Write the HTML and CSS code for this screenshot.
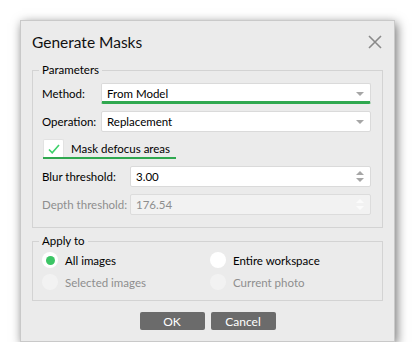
FILE: index.html
```html
<!DOCTYPE html>
<html>
  <head>
    <title>Generate Masks</title>
    <link rel="stylesheet" href="styles.css">
  </head>
  <body>
    <div class="dialog">
      <div class="dialog-header">
        <h1>Generate Masks</h1>
        <svg class="close" width="14" height="14" viewBox="0 0 14 14">
          <path d="M1 1 L13 13 M13 1 L1 13" stroke="#8a8a8a" stroke-width="1.6" fill="none" />
        </svg>
      </div>

      <fieldset class="group group-params">
        <legend>Parameters</legend>

        <div class="row">
          <label class="label label-short">Method:</label>
          <div class="combo combo-focus">
            <span>From Model</span>
            <span class="arrow"></span>
          </div>
        </div>

        <div class="row">
          <label class="label label-short">Operation:</label>
          <div class="combo">
            <span>Replacement</span>
            <span class="arrow"></span>
          </div>
        </div>

        <div class="check-row">
          <span class="checkbox">
            <svg width="14" height="12" viewBox="0 0 14 12">
              <path d="M2 6.5 L5.2 9.8 L12 2" stroke="#3dd16a" stroke-width="1.6" fill="none" />
            </svg>
          </span>
          <span class="check-label">Mask defocus areas</span>
        </div>

        <div class="row">
          <label class="label label-long">Blur threshold:</label>
          <div class="spin">
            <span>3.00</span>
            <span class="spin-arrows">
              <span class="up"></span>
              <span class="down"></span>
            </span>
          </div>
        </div>

        <div class="row disabled">
          <label class="label label-long">Depth threshold:</label>
          <div class="spin">
            <span>176.54</span>
            <span class="spin-arrows">
              <span class="up"></span>
              <span class="down"></span>
            </span>
          </div>
        </div>
      </fieldset>

      <fieldset class="group group-apply">
        <legend>Apply to</legend>
        <div class="radio-grid">
          <div class="radio-item">
            <span class="radio checked"></span>
            <span>All images</span>
          </div>
          <div class="radio-item">
            <span class="radio"></span>
            <span>Entire workspace</span>
          </div>
          <div class="radio-item disabled">
            <span class="radio"></span>
            <span>Selected images</span>
          </div>
          <div class="radio-item disabled">
            <span class="radio"></span>
            <span>Current photo</span>
          </div>
        </div>
      </fieldset>

      <div class="buttons">
        <button>OK</button>
        <button>Cancel</button>
      </div>
    </div>
  </body>
</html>
```

FILE: styles.css
```css
* {
  box-sizing: border-box;
  margin: 0;
  padding: 0;
}

body {
  background: white;
  font-family: Lato, 'Noto Sans', sans-serif;
  font-size: 11.5px;
  color: #000;
}

.dialog {
  margin: 20px 0 0 20px;
  width: 375px;
  height: 322px;
  padding: 0 11px;
  background: #ebebeb;
  border: 1px solid #c9c9c9;
  box-shadow: 2px 3px 10px rgba(0, 0, 0, 0.55);
}

.dialog-header {
  display: flex;
  align-items: center;
  justify-content: space-between;
  height: 42px;
}

h1 {
  font-size: 15.5px;
  font-weight: normal;
  color: #111;
}

.close {
  margin-right: 1px;
}

.group {
  border: 1px solid #d3d3d3;
  padding: 0 11px 0 9px;
}

.group legend {
  padding: 0 3px;
  margin-left: -3px;
  line-height: 14px;
}

.group-params {
  height: 165px;
  padding-top: 6px;
}

.row {
  display: flex;
  align-items: center;
  margin-bottom: 7px;
  white-space: nowrap;
}

.label {
  flex: none;
}

.label-short {
  width: 59px;
}

.label-long {
  width: 88px;
}

.combo,
.spin {
  flex: 1;
  display: flex;
  align-items: center;
  justify-content: space-between;
  height: 21px;
  padding: 0 6px 0 5px;
  background: white;
  border: 1px solid #dadada;
  border-radius: 2px;
}

.combo-focus {
  border-bottom: 3px solid #2fa84f;
  padding-top: 2px;
}

.arrow {
  width: 0;
  height: 0;
  border-left: 4px solid transparent;
  border-right: 4px solid transparent;
  border-top: 4px solid #a6a6a6;
}

.spin-arrows {
  display: flex;
  flex-direction: column;
  gap: 3px;
}

.spin-arrows .up {
  border-left: 4px solid transparent;
  border-right: 4px solid transparent;
  border-bottom: 4px solid #a6a6a6;
}

.spin-arrows .down {
  border-left: 4px solid transparent;
  border-right: 4px solid transparent;
  border-top: 4px solid #a6a6a6;
}

.disabled {
  color: #8e8e8e;
}

.disabled .spin {
  background: #f2f2f2;
  border-color: #dcdcdc;
}

.disabled .spin-arrows .up {
  border-bottom-color: #fbfbfb;
}

.disabled .spin-arrows .down {
  border-top-color: #fbfbfb;
}

.check-row {
  display: inline-flex;
  align-items: center;
  gap: 7px;
  margin: 0 0 7px 1px;
  border-bottom: 2px solid #2fa84f;
  padding-right: 6px;
  height: 20px;
}

.checkbox {
  display: flex;
  align-items: center;
  justify-content: center;
  width: 21px;
  height: 18px;
  background: white;
  border: 1px solid #e2e2e2;
  border-bottom: none;
  border-radius: 2px 2px 0 0;
}

.group-apply {
  margin-top: 6px;
  height: 67px;
  padding-top: 4px;
}

.radio-grid {
  display: grid;
  grid-template-columns: 168px 1fr;
  row-gap: 6px;
}

.radio-item {
  display: flex;
  align-items: center;
  gap: 7px;
}

.radio {
  display: flex;
  align-items: center;
  justify-content: center;
  width: 16px;
  height: 16px;
  border-radius: 50%;
  background: white;
}

.radio.checked::after {
  content: '';
  width: 9px;
  height: 9px;
  border-radius: 50%;
  background: #3cc565;
}

.radio-item.disabled .radio {
  background: #f2f2f2;
}

.buttons {
  display: flex;
  justify-content: center;
  gap: 6px;
  margin-top: 11px;
}

button {
  width: 65px;
  height: 18px;
  background: #6b6b6b;
  border: none;
  border-radius: 2px;
  color: white;
  font-family: Lato, 'Noto Sans', sans-serif;
  font-size: 12px;
}
```
